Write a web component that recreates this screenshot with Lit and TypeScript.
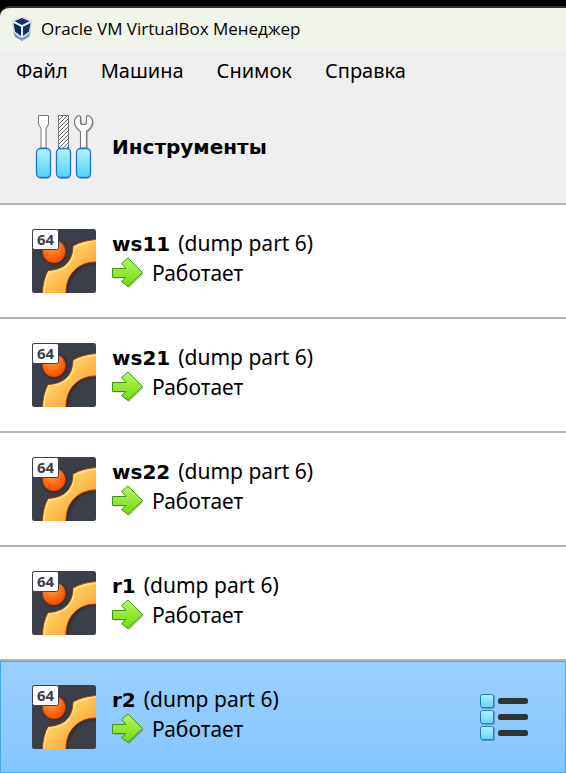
import { LitElement, html, css, svg } from "lit";
import { customElement, property } from "lit/decorators.js";

interface Machine {
  name: string;
  snapshot: string;
  state: string;
}

const MENUS = ["Файл", "Машина", "Снимок", "Справка"];

const MACHINES: Machine[] = [
  { name: "ws11", snapshot: "dump part 6", state: "Работает" },
  { name: "ws21", snapshot: "dump part 6", state: "Работает" },
  { name: "ws22", snapshot: "dump part 6", state: "Работает" },
  { name: "r1", snapshot: "dump part 6", state: "Работает" },
  { name: "r2", snapshot: "dump part 6", state: "Работает" },
];

const logoIcon = html`
  <svg width="22" height="24" viewBox="0 0 22 24" aria-hidden="true">
    <path d="M2 15 L11 22 L20 15 L18 20 L11 24 L4 20 Z" fill="#8e9dc0" />
    <path d="M11 0 L20.500 4 L19 15.500 L11 21 L3 15.500 L1.500 4 Z" fill="#eaf0f7" stroke="#9fb0cc" stroke-width=".5" />
    <path d="M11 1 L18.500 4.300 L11 8 L3.500 4.300 Z" fill="#12356b" />
    <path d="M2.500 6 L10 9.800 V19 L4 14.800 Z" fill="#0a2a5c" />
    <path d="M19.500 6 L12 9.800 V19 L18 14.800 Z" fill="#12356b" />
    <path d="M4 18 Q11 25 18 18" fill="none" stroke="#6f82ad" stroke-width="1" />
  </svg>
`;

const handle = (x: number) => svg`
  <rect x=${x + 1} y="35" width="14" height="29" rx="4" fill="#000" opacity=".25" />
  <rect x=${x + 0.5} y="33.5" width="14" height="29" rx="4" fill="url(#handle)" stroke="#1d74cf" stroke-width="1.3" />
`;

const WRENCH =
  "M46.5 .5 Q48.500 .5 48.500 2.500 V7.500 Q48.500 9.500 51.500 9.500 Q54.500 9.500 54.500 7.500 V2.500 Q54.500 .5 56.500 .5 Q60.500 2.500 60.500 7 Q60.500 12 54.500 16.500 V33 H48.500 V16.500 Q42.500 12 42.500 7 Q42.500 2.500 46.500 .5 Z";

const toolsIcon = html`
  <svg width="64" height="64" viewBox="0 0 64 64" aria-hidden="true">
    <defs>
      <linearGradient id="handle" x1="0" y1="0" x2="0" y2="1">
        <stop offset="0" stop-color="#b4f3ff" />
        <stop offset="1" stop-color="#4fd0ff" />
      </linearGradient>
      <pattern id="hatch" width="4" height="4" patternUnits="userSpaceOnUse">
        <path d="M-1 1 L1 -1 M0 4 L4 0 M3 5 L5 3" stroke="#555" stroke-width=".9" />
      </pattern>
    </defs>
    <path d="M7 1.500 H17 V10 L14.500 14 V33 H9.500 V14 L7 10 Z" fill="#bbb" />
    <path d="M6.500 .500 H16.500 V9 L14 13.500 V33 H9 V13.500 L6.500 9 Z" fill="#fff" stroke="#777" />
    <rect x="26.500" y=".500" width="10" height="33" fill="#fff" />
    <rect x="26.500" y=".500" width="10" height="33" fill="url(#hatch)" stroke="#777" />
    <path d=${WRENCH} transform="translate(1 1)" fill="#bbb" stroke="#bbb" />
    <path d=${WRENCH} fill="#fff" stroke="#777" stroke-width="1.2" />
    ${handle(4)}${handle(24)}${handle(44)}
  </svg>
`;

const guestIcon = html`
  <svg width="64" height="64" viewBox="0 0 64 64" role="img" aria-label="64-bit">
    <defs>
      <clipPath id="tile"><rect width="64" height="64" rx="2.500" /></clipPath>
      <linearGradient id="band" x1=".1" y1=".2" x2=".8" y2=".9">
        <stop offset="0" stop-color="#ffe478" />
        <stop offset=".4" stop-color="#ffc85a" />
        <stop offset=".7" stop-color="#ffae42" />
      </linearGradient>
      <radialGradient id="ball" cx=".4" cy=".3" r=".75">
        <stop offset="0" stop-color="#ff9d50" />
        <stop offset=".6" stop-color="#ff680c" />
        <stop offset="1" stop-color="#e84a00" />
      </radialGradient>
      <filter id="soft" x="-20%" y="-20%" width="140%" height="140%"><feGaussianBlur stdDeviation="1.5" /></filter>
    </defs>
    <g clip-path="url(#tile)">
      <rect width="64" height="64" fill="#3b3f4a" />
      <path d="M11 66 C11 56 13 48 16 41.500 C32 41 41 33 41 17 C48 13 56 11 66 11 V34 C48 33 35 47 36 66 Z" fill="#22242b" filter="url(#soft)" />
      <circle cx="22.500" cy="23" r="12" fill="#22242b" filter="url(#soft)" />
      <path d="M10.500 66 C10.500 56 12.500 48 16 41.500 C32 41 41 32 41 17 C48 13 56 11 66 10.500 V33 C46 32 33 46 34 66 Z" fill="url(#band)" stroke="#b5400c" />
      <path d="M12 66 C12 56 13.500 49 17 43 C34 42 42 32 42.500 18 C49 14.500 56 12.500 66 12" fill="none" stroke="#ffee98" stroke-width="1.500" opacity=".7" />
      <circle cx="22" cy="22.500" r="11.500" fill="url(#ball)" stroke="#b5340c" stroke-width=".6" />
    </g>
    <rect x=".500" y=".500" width="26" height="20" rx="2" fill="#fff" stroke="#3b3f4a" />
    <text x="5" y="16" class="bits">64</text>
  </svg>
`;

const runningIcon = html`
  <svg width="32" height="32" viewBox="0 0 32 32" aria-hidden="true">
    <defs>
      <linearGradient id="go" x1="0" y1="0" x2="0" y2="1">
        <stop offset="0" stop-color="#b8f36a" />
        <stop offset="1" stop-color="#6ede08" />
      </linearGradient>
    </defs>
    <path d="M1.500 12 H15 L10.500 7.500 L17 2 L31.500 17 L17 31 L10.500 25.500 L15 21.500 H1.500 Z" fill="#000" opacity=".22" />
    <path d="M.500 11.500 H14 L9.500 6.500 L16 1 L30.500 15.500 L16 29.500 L9.500 24.500 L14 20.500 H.500 Z" fill="url(#go)" stroke="#44940f" />
  </svg>
`;

const menuRow = (y: number) => svg`
  <rect x="1" y=${y + 1} width="14" height="14" rx="2" fill="#000" opacity=".25" />
  <rect x=".5" y=${y + 0.5} width="13" height="13" rx="2" fill="url(#cell)" stroke="#1d7ad6" />
  <rect x="18" y=${y + 4} width="30" height="6" rx="2.5" fill="#333" />
`;

const listIcon = html`
  <svg width="48" height="48" viewBox="0 0 48 48" aria-hidden="true">
    <defs>
      <linearGradient id="cell" x1="0" y1="0" x2="0" y2="1">
        <stop offset="0" stop-color="#b4f3ff" />
        <stop offset="1" stop-color="#62d4ff" />
      </linearGradient>
    </defs>
    ${menuRow(1)}${menuRow(17)}${menuRow(33)}
  </svg>
`;

@customElement("vm-item")
export class VmItem extends LitElement {
  @property({ attribute: false }) machine!: Machine;
  @property({ type: Boolean, reflect: true }) selected = false;

  static styles = css`
    :host {
      display: flex;
      align-items: flex-start;
      gap: 16px;
      padding: 24px 38px 24px 32px;
      background: #fff;
    }
    :host([selected]) {
      background: linear-gradient(#9ad0ff, #84c6ff);
      box-shadow: inset 0 0 0 1px #42a5f5;
    }
    svg {
      display: block;
      flex: none;
    }
    .info {
      flex: 1;
      min-width: 0;
      white-space: nowrap;
      font-size: 21px;
    }
    .title {
      display: flex;
      align-items: baseline;
      gap: 8px;
      height: 28px;
      line-height: 28px;
    }
    .name {
      font: bold 20px/28px "DejaVu Sans", sans-serif;
    }
    .state {
      display: flex;
      align-items: center;
      gap: 8px;
      line-height: 32px;
    }
    .bits {
      font: bold 15px "Noto Sans", sans-serif;
      fill: #3b3f4a;
    }
    .menu {
      align-self: center;
      padding: 0;
      border: 0;
      background: none;
    }
  `;

  render() {
    const { name, snapshot, state } = this.machine;
    return html`
      ${guestIcon}
      <div class="info">
        <div class="title"><span class="name">${name}</span><span>(${snapshot})</span></div>
        <div class="state">${runningIcon}<span>${state}</span></div>
      </div>
      ${this.selected ? html`<button class="menu" aria-label="Меню машины">${listIcon}</button>` : null}
    `;
  }
}

@customElement("app-root")
export class AppRoot extends LitElement {
  static styles = css`
    :host {
      display: block;
      min-height: 100vh;
      background: #fff;
      color: #000;
      font-family: "Noto Sans", sans-serif;
    }
    .desktop {
      padding-top: 6px;
      background: #000;
    }
    .titlebar {
      display: flex;
      align-items: center;
      gap: 8px;
      box-sizing: border-box;
      height: 45px;
      padding: 0 11px 2px;
      border-top: 2px solid #333;
      border-top-left-radius: 10px;
      background: #f0f4ea;
    }
    h1 {
      margin: 0;
      font: 17px/24px "Open Sans", sans-serif;
    }
    .menubar {
      display: flex;
      gap: 33px;
      padding: 0 16px;
      background: #efefef;
    }
    .menubar button {
      padding: 0;
      border: 0;
      background: none;
      color: inherit;
      font: 20px/40px "Noto Sans", sans-serif;
    }
    .tools {
      display: flex;
      align-items: center;
      gap: 16px;
      padding: 24px 32px;
      background: #efefef;
      font: bold 20px/28px "DejaVu Sans", sans-serif;
    }
    .list {
      margin: 0;
      padding: 0;
      list-style: none;
    }
    .list li {
      border-top: 2px solid #b4b4b4;
    }
  `;

  render() {
    return html`
      <header class="desktop">
        <div class="titlebar">${logoIcon}<h1>Oracle VM VirtualBox Менеджер</h1></div>
      </header>
      <nav class="menubar">${MENUS.map((m) => html`<button>${m}</button>`)}</nav>
      <section class="tools">${toolsIcon}<span>Инструменты</span></section>
      <ul class="list">
        ${MACHINES.map((m) => html`<li><vm-item .machine=${m} ?selected=${m.name === "r2"}></vm-item></li>`)}
      </ul>
    `;
  }
}
